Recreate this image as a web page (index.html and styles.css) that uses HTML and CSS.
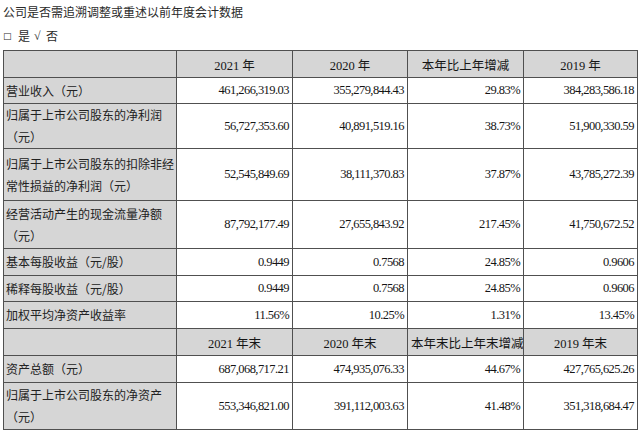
FILE: index.html
```html
<!DOCTYPE html>
<html lang="zh">
<head>
<meta charset="utf-8">
<link rel="stylesheet" href="styles.css">
</head>
<body>
<div class="page">
  <div class="title">公司是否需追溯调整或重述以前年度会计数据</div>
  <div class="choice"><span class="box">□</span><span class="opt">是</span><span class="check">√</span><span class="opt">否</span></div>
  <table class="fin">
    <colgroup>
      <col class="c0"><col class="c1"><col class="c2"><col class="c3"><col class="c4">
    </colgroup>
    <tr class="head h27">
      <td class="label"></td><td>2021 年</td><td>2020 年</td><td>本年比上年增减</td><td>2019 年</td>
    </tr>
    <tr class="h26">
      <td class="label">营业收入（元）</td><td class="num">461,266,319.03</td><td class="num">355,279,844.43</td><td class="num">29.83%</td><td class="num">384,283,586.18</td>
    </tr>
    <tr class="h43">
      <td class="label">归属于上市公司股东的净利润<br>（元）</td><td class="num">56,727,353.60</td><td class="num">40,891,519.16</td><td class="num">38.73%</td><td class="num">51,900,330.59</td>
    </tr>
    <tr class="h52">
      <td class="label">归属于上市公司股东的扣除非经<br>常性损益的净利润（元）</td><td class="num">52,545,849.69</td><td class="num">38,111,370.83</td><td class="num">37.87%</td><td class="num">43,785,272.39</td>
    </tr>
    <tr class="h48">
      <td class="label">经营活动产生的现金流量净额<br>（元）</td><td class="num">87,792,177.49</td><td class="num">27,655,843.92</td><td class="num">217.45%</td><td class="num">41,750,672.52</td>
    </tr>
    <tr class="h27">
      <td class="label">基本每股收益（元/股）</td><td class="num">0.9449</td><td class="num">0.7568</td><td class="num">24.85%</td><td class="num">0.9606</td>
    </tr>
    <tr class="h26">
      <td class="label">稀释每股收益（元/股）</td><td class="num">0.9449</td><td class="num">0.7568</td><td class="num">24.85%</td><td class="num">0.9606</td>
    </tr>
    <tr class="h27">
      <td class="label">加权平均净资产收益率</td><td class="num">11.56%</td><td class="num">10.25%</td><td class="num">1.31%</td><td class="num">13.45%</td>
    </tr>
    <tr class="head h27">
      <td class="label"></td><td>2021 年末</td><td>2020 年末</td><td>本年末比上年末增减</td><td>2019 年末</td>
    </tr>
    <tr class="h27">
      <td class="label">资产总额（元）</td><td class="num">687,068,717.21</td><td class="num">474,935,076.33</td><td class="num">44.67%</td><td class="num">427,765,625.26</td>
    </tr>
    <tr class="h47">
      <td class="label">归属于上市公司股东的净资产<br>（元）</td><td class="num">553,346,821.00</td><td class="num">391,112,003.63</td><td class="num">41.48%</td><td class="num">351,318,684.47</td>
    </tr>
  </table>
</div>
</body>
</html>
```
FILE: styles.css
```css
html, body {
  margin: 0;
  padding: 0;
  background: #ffffff;
}
.page {
  padding: 4px 0 0 3px;
  font-family: "Liberation Serif", "Noto Sans CJK SC", serif;
  color: #1a1a1a;
}
.title {
  font-family: "Noto Sans CJK SC", sans-serif;
  font-size: 12px;
  line-height: 16px;
  color: #2a2a2a;
}
.choice {
  margin-top: 8px;
  height: 16px;
  line-height: 16px;
  font-size: 12px;
  color: #2a2a2a;
  display: flex;
  align-items: center;
}
.choice .box {
  font-size: 9px;
  width: 15px;
  font-family: "DejaVu Sans", sans-serif;
}
.choice .opt {
  font-family: "Noto Sans CJK SC", sans-serif;
  width: 16px;
}
.choice .check {
  font-family: "Liberation Serif", serif;
  width: 12px;
}
.fin {
  margin-top: 6px;
  border-collapse: collapse;
  table-layout: fixed;
  width: 634px;
}
.c0 { width: 173px; }
.c1 { width: 116px; }
.c2 { width: 115px; }
.c3 { width: 116px; }
.c4 { width: 114px; }
.fin td {
  border: 1px solid #505050;
  padding: 0 3px;
  font-size: 12.5px;
  vertical-align: middle;
  white-space: nowrap;
  overflow: hidden;
  color: #151515;
}
.fin td.label {
  background: #d6d6d6;
  font-family: "Noto Sans CJK SC", sans-serif;
  font-size: 12px;
  text-align: left;
  padding-left: 2px;
  line-height: 22px;
  color: #222;
}
.fin td.num {
  text-align: right;
  letter-spacing: -0.55px;
}
.head td {
  background: #d6d6d6;
  text-align: center;
  font-family: "Liberation Serif", "Noto Sans CJK SC", serif;
}
.h26 { height: 26px; }
.h27 { height: 27px; }
.h43 { height: 43px; }
.h47 { height: 47px; }
.h48 { height: 48px; }
.h52 { height: 52px; }
```
